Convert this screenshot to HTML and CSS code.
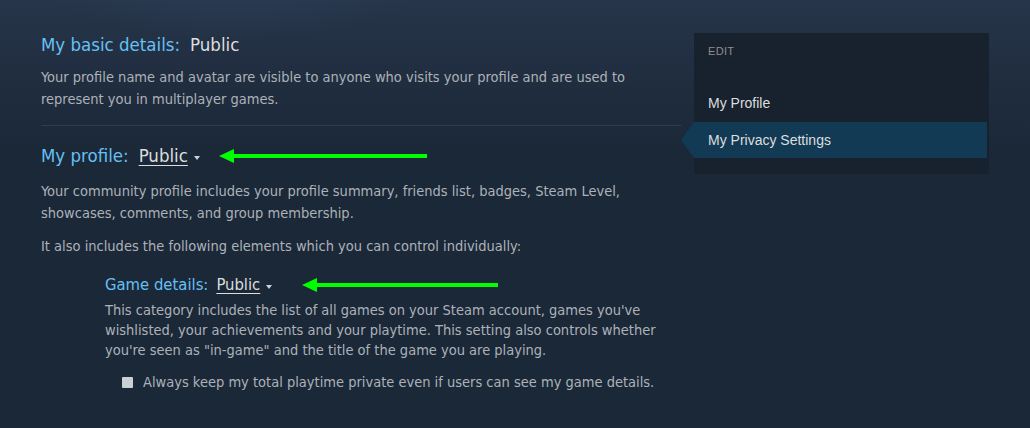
FILE: index.html
```html
<!DOCTYPE html>
<html>
<head>
<meta charset="utf-8">
<link rel="stylesheet" href="styles.css">
</head>
<body>
<div class="page">
  <main class="main">
    <section class="block first">
      <h2 class="heading"><span class="label">My basic details:</span> <span class="value">Public</span></h2>
      <p class="desc">Your profile name and avatar are visible to anyone who visits your profile and are used to represent you in multiplayer games.</p>
    </section>
    <hr class="divider">
    <section class="block">
      <h2 class="heading"><span class="label">My profile:</span> <span class="dropdown">Public</span><span class="caret"></span>
        <svg class="arrow arrow-long" width="210" height="14" viewBox="0 0 210 14"><polygon points="0,7 15,0 15,14" fill="#00ff00"/><rect x="12" y="5" width="196" height="4" fill="#00ff00"/></svg>
      </h2>
      <p class="desc profile-desc">Your community profile includes your profile summary, friends list, badges, Steam Level, showcases, comments, and group membership.</p>
      <p class="desc">It also includes the following elements which you can control individually:</p>
      <div class="sub">
        <h3 class="heading small"><span class="label">Game details:</span> <span class="dropdown">Public</span><span class="caret"></span>
          <svg class="arrow arrow-short" width="198" height="14" viewBox="0 0 198 14"><polygon points="0,7 15,0 15,14" fill="#00ff00"/><rect x="12" y="5" width="184" height="4" fill="#00ff00"/></svg>
        </h3>
        <p class="desc tight">This category includes the list of all games on your Steam account, games you've wishlisted, your achievements and your playtime. This setting also controls whether you're seen as "in-game" and the title of the game you are playing.</p>
        <label class="check"><span class="box"></span>Always keep my total playtime private even if users can see my game details.</label>
      </div>
    </section>
  </main>
  <aside class="side">
    <div class="side-title">EDIT</div>
    <ul class="nav">
      <li class="nav-item">My Profile</li>
      <li class="nav-item active">My Privacy Settings</li>
    </ul>
  </aside>
</div>
</body>
</html>
```

FILE: styles.css
```css
html, body {
  margin: 0;
  padding: 0;
}
body {
  width: 1030px;
  height: 428px;
  overflow: hidden;
  background-color: #1b2838;
  background-image:
    radial-gradient(ellipse 190px 60px at 235px -20px, rgba(48,66,92,0.55), rgba(48,66,92,0) 100%),
    linear-gradient(180deg, #26354a 0px, #222f42 60px, #1b2838 150px);
  background-repeat: no-repeat;
  font-family: "DejaVu Sans Condensed", "DejaVu Sans", sans-serif;
  font-stretch: condensed;
}
.page {
  display: flex;
  align-items: flex-start;
  padding: 33px 0 0 41px;
  gap: 13px;
}
.main {
  width: 640px;
  flex: none;
}
.heading {
  margin: 0;
  font-weight: normal;
  font-size: 18.5px;
  line-height: 24px;
  display: flex;
  align-items: center;
  white-space: nowrap;
}
.label {
  color: #66c0f4;
  margin-right: 10px;
}
.value {
  color: #dcdedf;
}
.dropdown {
  color: #dcdedf;
  text-decoration: underline;
  text-underline-offset: 3px;
  text-decoration-thickness: 1px;
}
.caret {
  width: 0;
  height: 0;
  border-left: 3.5px solid transparent;
  border-right: 3.5px solid transparent;
  border-top: 4px solid #c6d4df;
  margin-left: 6px;
  margin-top: 3px;
}
.arrow {
  display: block;
  margin-left: 19px;
}
.arrow-short {
  margin-left: 30px;
}
.desc {
  margin: 9px 0 0;
  color: #acb2b8;
  font-size: 14.5px;
  line-height: 22px;
}
.desc.profile-desc {
  margin-top: 12px;
}
.desc + .desc {
  margin-top: 11px;
}
.divider {
  border: none;
  border-top: 1px solid #2e3d50;
  margin: 15px 0 18px;
  width: 640px;
}
.sub {
  padding-left: 64px;
  margin-top: 17px;
}
.heading.small {
  font-size: 16.5px;
  line-height: 22px;
}
.heading.small .label {
  margin-right: 8px;
}
.desc.tight {
  margin-top: 4px;
  line-height: 20px;
}
.check {
  display: flex;
  align-items: center;
  margin: 12px 0 0 17px;
  color: #acb2b8;
  font-size: 14.5px;
  line-height: 20px;
}
.box {
  width: 11px;
  height: 11px;
  background: #c9d1d3;
  border-radius: 1px;
  margin-right: 10px;
}
.side {
  width: 295px;
  flex: none;
  background-color: #18222f;
  padding: 11px 0 16px;
  font-family: "Liberation Sans", Arial, sans-serif;
  font-stretch: normal;
}
.side-title {
  color: #938c88;
  font-size: 11px;
  letter-spacing: 0.3px;
  padding-left: 14px;
  line-height: 14px;
}
.nav {
  list-style: none;
  margin: 27px 0 0;
  padding: 0;
}
.nav-item {
  color: #dcdedf;
  font-size: 14px;
  line-height: 36px;
  height: 36px;
  padding-left: 14px;
  margin-right: 2px;
  position: relative;
}
.nav-item + .nav-item {
  margin-top: 1px;
}
.nav-item.active {
  background: #133a54;
}
.nav-item.active::before {
  content: "";
  position: absolute;
  left: -13px;
  top: 0;
  width: 0;
  height: 0;
  border-top: 18px solid transparent;
  border-bottom: 18px solid transparent;
  border-right: 13px solid #133a54;
}
```
